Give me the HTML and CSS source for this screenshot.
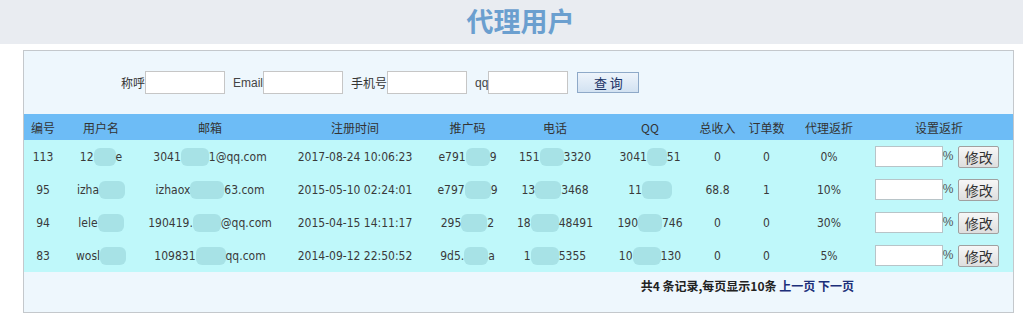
FILE: index.html
```html
<!DOCTYPE html>
<html lang="zh-CN">
<head>
    <meta charset="UTF-8">
    <title>代理用户</title>
    <link rel="stylesheet" href="styles.css">
</head>
<body>

    <!-- Title Bar -->
    <div class="title-bar">
        <h1>代理用户</h1>
    </div>

    <div class="panel">
        <!-- Search Form -->
        <form class="search">
            <label>称呼<input type="text"></label>
            <label class="latin">Email<input type="text"></label>
            <label>手机号<input type="text"></label>
            <label class="latin">qq<input type="text"></label>
            <button type="button" class="btn-query">查 询</button>
        </form>

        <!-- Agent Table -->
        <table class="agents">
            <colgroup>
                <col style="width:38px"><col style="width:78px"><col style="width:140px">
                <col style="width:150px"><col style="width:75px"><col style="width:100px">
                <col style="width:90px"><col style="width:45px"><col style="width:53px">
                <col style="width:72px"><col style="width:148px">
            </colgroup>
            <thead>
                <tr>
                    <th>编号</th><th>用户名</th><th>邮箱</th><th>注册时间</th><th>推广码</th>
                    <th>电话</th><th>QQ</th><th>总收入</th><th>订单数</th><th>代理返折</th><th>设置返折</th>
                </tr>
            </thead>
            <tbody>
                <tr>
                    <td>113</td>
                    <td>12<span class="blur" style="width:22px"></span>e</td>
                    <td>3041<span class="blur" style="width:28px"></span>1@qq.com</td>
                    <td>2017-08-24 10:06:23</td>
                    <td>e791<span class="blur" style="width:24px"></span>9</td>
                    <td>151<span class="blur" style="width:24px"></span>3320</td>
                    <td>3041<span class="blur" style="width:20px"></span>51</td>
                    <td>0</td><td>0</td><td>0%</td>
                    <td class="set"><input type="text">%<button type="button">修改</button></td>
                </tr>
                <tr>
                    <td>95</td>
                    <td>izha<span class="blur" style="width:26px"></span></td>
                    <td>izhaox<span class="blur" style="width:34px"></span>63.com</td>
                    <td>2015-05-10 02:24:01</td>
                    <td>e797<span class="blur" style="width:26px"></span>9</td>
                    <td>13<span class="blur" style="width:26px"></span>3468</td>
                    <td>11<span class="blur" style="width:30px"></span></td>
                    <td>68.8</td><td>1</td><td>10%</td>
                    <td class="set"><input type="text">%<button type="button">修改</button></td>
                </tr>
                <tr>
                    <td>94</td>
                    <td>lele<span class="blur" style="width:26px"></span></td>
                    <td>190419.<span class="blur" style="width:28px"></span>@qq.com</td>
                    <td>2015-04-15 14:11:17</td>
                    <td>295<span class="blur" style="width:26px"></span>2</td>
                    <td>18<span class="blur" style="width:28px"></span>48491</td>
                    <td>190<span class="blur" style="width:24px"></span>746</td>
                    <td>0</td><td>0</td><td>30%</td>
                    <td class="set"><input type="text">%<button type="button">修改</button></td>
                </tr>
                <tr>
                    <td>83</td>
                    <td>wosl<span class="blur" style="width:26px"></span></td>
                    <td>109831<span class="blur" style="width:30px"></span>qq.com</td>
                    <td>2014-09-12 22:50:52</td>
                    <td>9d5.<span class="blur" style="width:24px"></span>a</td>
                    <td>1<span class="blur" style="width:28px"></span>5355</td>
                    <td>10<span class="blur" style="width:28px"></span>130</td>
                    <td>0</td><td>0</td><td>5%</td>
                    <td class="set"><input type="text">%<button type="button">修改</button></td>
                </tr>
            </tbody>
        </table>

        <!-- Pager -->
        <div class="pager">
            共4 条记录,每页显示10条 <a href="#">上一页</a> <a href="#">下一页</a>
        </div>
    </div>

</body>
</html>
```

FILE: styles.css
```css
/* Base */
body {
    margin: 0;
    padding: 0;
    background-color: #ffffff;
    color: #333;
    font-family: "Noto Sans CJK SC", sans-serif;
    font-size: 12px;
}

/* Title Bar */
.title-bar {
    height: 44px;
    background-color: #e9ecf1;
    text-align: center;
}

.title-bar h1 {
    margin: 0;
    padding-left: 18px;
    font-size: 27px;
    line-height: 42px;
    font-weight: bold;
    color: #6b9fcf;
}

/* Panel */
.panel {
    width: 989px;
    margin: 6px 0 0 23px;
    border: 1px solid #c4c8cc;
    background-color: #eef7fd;
}

/* Search Form */
.search {
    display: flex;
    align-items: center;
    height: 63px;
    padding-left: 97px;
}

.search label {
    display: flex;
    align-items: center;
    margin-right: 8px;
    font-size: 12px;
    color: #333;
}

.search label.latin {
    font-family: "Liberation Sans", Arial, sans-serif;
    font-size: 12px;
    color: #444;
}

.search input {
    width: 78px;
    height: 21px;
    margin: 0;
    padding: 0;
    border: 1px solid #c6c6c6;
    background-color: #fff;
    box-sizing: content-box;
}

.btn-query {
    width: 62px;
    height: 21px;
    margin-left: 1px;
    padding: 0;
    border: 1px solid #8ea9c8;
    background: linear-gradient(#eef4fb, #d2e2f2);
    color: #1b3366;
    font-family: "Noto Sans CJK SC", sans-serif;
    font-size: 13px;
    line-height: 19px;
}

/* Table */
.agents {
    width: 989px;
    border-collapse: collapse;
    table-layout: fixed;
}

.agents th {
    height: 26px;
    padding: 0;
    background-color: #6dbcf6;
    font-weight: normal;
    font-size: 12px;
    color: #333;
    text-align: center;
}

.agents td {
    height: 33px;
    padding: 0;
    background-color: #bff8fa;
    font-family: "DejaVu Sans Condensed", "DejaVu Sans", sans-serif;
    font-size: 12px;
    color: #3a3a3a;
    text-align: center;
    white-space: nowrap;
    overflow: hidden;
}

.blur {
    display: inline-block;
    height: 18px;
    vertical-align: middle;
    background-color: #a7e2e6;
    border-radius: 6px;
}

.agents td.set {
    padding-right: 4px;
    font-family: Arial, sans-serif;
    color: #555;
}

.set input {
    width: 66px;
    height: 19px;
    margin: 0;
    padding: 0;
    border: 1px solid #b8c4c8;
    background-color: #fff;
    vertical-align: middle;
}

.set button {
    width: 41px;
    height: 22px;
    margin-left: 5px;
    padding: 0;
    border: 1px solid #a0a0a0;
    border-radius: 2px;
    background: linear-gradient(#f7f7f7, #dedede);
    font-family: "Noto Sans CJK SC", sans-serif;
    font-size: 14px;
    color: #333;
    vertical-align: middle;
}

/* Pager */
.pager {
    height: 40px;
    padding-right: 159px;
    text-align: right;
    line-height: 28px;
    font-weight: bold;
    font-size: 12px;
    color: #222;
}

.pager a {
    color: #1c2f7a;
    text-decoration: none;
}
```
